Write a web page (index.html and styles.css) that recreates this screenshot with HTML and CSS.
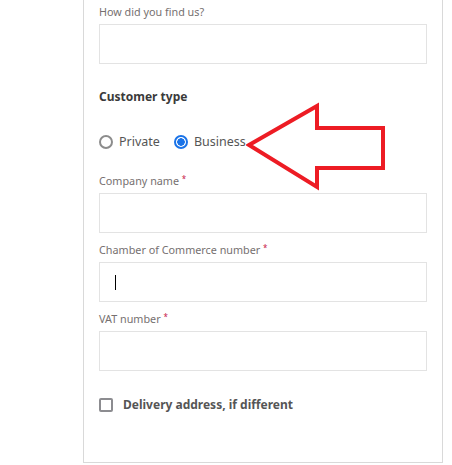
FILE: index.html
```html
<!DOCTYPE html>
<html>
<head>
<meta charset="utf-8">
<link rel="stylesheet" href="styles.css">
</head>
<body>
<div class="card">
  <div class="field">
    <label class="label">How did you find us?</label>
    <div class="input"></div>
  </div>

  <h3 class="section-title">Customer type</h3>

  <div class="radios">
    <span class="radio"><span class="circle"></span>Private</span>
    <span class="radio checked"><span class="circle"></span>Business</span>
  </div>

  <div class="field first">
    <label class="label">Company name <span class="req">*</span></label>
    <div class="input"></div>
  </div>
  <div class="field">
    <label class="label">Chamber of Commerce number <span class="req">*</span></label>
    <div class="input"><span class="caret"></span></div>
  </div>
  <div class="field">
    <label class="label">VAT number <span class="req">*</span></label>
    <div class="input"></div>
  </div>

  <div class="check">
    <span class="box"></span>
    <span class="check-label">Delivery address, if different</span>
  </div>

  <svg class="arrow" width="140" height="90" viewBox="0 0 140 90">
    <polygon points="3,44 71,5 71,27 137,27 137,67 71,67 71,86" fill="none" stroke="#ed1c24" stroke-width="4" stroke-linejoin="miter"/>
  </svg>
</div>
</body>
</html>
```
FILE: styles.css
```css
html, body {
  margin: 0;
  padding: 0;
  background: #ffffff;
}
body {
  font-family: "Noto Sans", "Open Sans", sans-serif;
  width: 452px;
  height: 465px;
  overflow: hidden;
}
.card {
  position: relative;
  margin-left: 83px;
  width: 328px;
  height: 462px;
  padding: 0 15px;
  border: 1px solid #d9d9d9;
  border-top: none;
  box-sizing: content-box;
  display: flex;
  flex-direction: column;
}
.field {
  display: flex;
  flex-direction: column;
  gap: 4px;
  margin-top: 9px;
}
.card > .field:first-child {
  margin-top: 4px;
}
.field.first {
  margin-top: 21px;
}
.label {
  font-size: 10.8px;
  line-height: 16px;
  color: #767070;
}
.req {
  color: #c8174a;
  font-size: 8px;
  vertical-align: top;
  line-height: 11px;
}
.input {
  position: relative;
  height: 38px;
  border: 1px solid #e3e3e3;
  background: #fff;
}
.caret {
  position: absolute;
  left: 15px;
  top: 12px;
  width: 1px;
  height: 15px;
  background: #000;
}
.section-title {
  margin: 24px 0 0;
  font-size: 12px;
  line-height: 18px;
  font-weight: 700;
  color: #3a3a3a;
}
.radios {
  display: flex;
  gap: 14px;
  margin-top: 26px;
  font-size: 12.5px;
  line-height: 20px;
  color: #555;
}
.radio {
  display: flex;
  align-items: center;
  gap: 6px;
}
.circle {
  width: 10px;
  height: 10px;
  border: 2px solid #8c8c8c;
  border-radius: 50%;
  background: #fff;
}
.radio.checked .circle {
  border-color: #1a73e8;
  background: radial-gradient(circle, #1a73e8 0 3.5px, #fff 4px);
}
.check {
  display: flex;
  align-items: center;
  gap: 10px;
  margin-top: 25px;
}
.box {
  width: 10px;
  height: 10px;
  border: 2px solid #8c8c90;
  border-radius: 2px;
}
.check-label {
  font-size: 12px;
  line-height: 18px;
  font-weight: 700;
  color: #555;
}
.arrow {
  position: absolute;
  left: 162px;
  top: 101px;
}
```
